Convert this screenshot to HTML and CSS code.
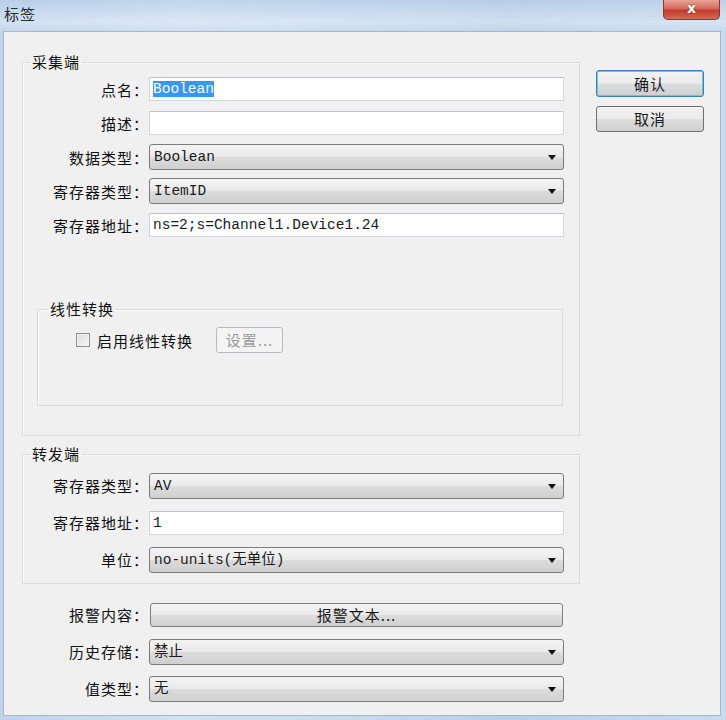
FILE: index.html
```html
<!DOCTYPE html>
<html lang="zh-CN">
<head>
  <meta charset="UTF-8" />
  <title>标签</title>
  <link rel="stylesheet" href="styles.css">
</head>
<body>
  <div class="window">
    <!-- Barre de titre -->
    <div class="titlebar">
      <span class="title">标签</span>
      <span class="close">x</span>
    </div>

    <div class="client">
      <div class="main">
        <fieldset class="group">
          <legend>采集端</legend>
          <div class="row">
            <label>点名：</label>
            <div class="edit"><span class="selected-text">Boolean</span></div>
          </div>
          <div class="row">
            <label>描述：</label>
            <div class="edit"></div>
          </div>
          <div class="row">
            <label>数据类型：</label>
            <div class="combo">Boolean</div>
          </div>
          <div class="row">
            <label>寄存器类型：</label>
            <div class="combo">ItemID</div>
          </div>
          <div class="row">
            <label>寄存器地址：</label>
            <div class="edit">ns=2;s=Channel1.Device1.24</div>
          </div>

          <fieldset class="group sub">
            <legend>线性转换</legend>
            <div class="check-row">
              <span class="checkbox"></span>
              <span class="check-label">启用线性转换</span>
              <button class="btn-small" disabled>设置...</button>
            </div>
          </fieldset>
        </fieldset>

        <fieldset class="group forward">
          <legend>转发端</legend>
          <div class="row">
            <label>寄存器类型：</label>
            <div class="combo">AV</div>
          </div>
          <div class="row">
            <label>寄存器地址：</label>
            <div class="edit">1</div>
          </div>
          <div class="row">
            <label>单位：</label>
            <div class="combo">no-units(无单位)</div>
          </div>
        </fieldset>

        <div class="extra">
          <div class="row">
            <label>报警内容：</label>
            <button class="btn-wide">报警文本...</button>
          </div>
          <div class="row">
            <label>历史存储：</label>
            <div class="combo">禁止</div>
          </div>
          <div class="row">
            <label>值类型：</label>
            <div class="combo">无</div>
          </div>
        </div>
      </div>

      <div class="side">
        <button class="btn default">确认</button>
        <button class="btn">取消</button>
      </div>
    </div>
  </div>
</body>
</html>
```

FILE: styles.css
```css
*{margin:0;padding:0;box-sizing:border-box}
body{
  font-family:'Noto Sans CJK SC','Liberation Sans',sans-serif;
  font-size:15px;
  color:#111;
  background:#c6d8ec;
}

.window{
  width:726px;height:720px;
  display:flex;flex-direction:column;
  background:linear-gradient(90deg,#bfd3ea 0%,#d3e1f1 25%,#c9dbee 45%,#b9cfe8 70%,#c8daee 100%);
}

/* ---------- Barre de titre ---------- */
.titlebar{height:31px;display:flex;justify-content:space-between;align-items:flex-start;padding:0 6px 0 4px;
  background:linear-gradient(180deg,rgba(180,204,232,.6) 0%,rgba(226,236,247,.55) 70%,rgba(205,221,239,.4) 100%)}
.title{line-height:27px;font-size:15px;color:#2a2a2a;letter-spacing:1px}
.close{width:57px;height:20px;border:1px solid #8a3a30;border-top:none;border-radius:0 0 5px 5px;
  background:linear-gradient(180deg,#e7a497 0%,#d6685a 45%,#c43d2c 55%,#d46a55 100%);
  color:#fff;font-family:'DejaVu Sans',sans-serif;font-weight:bold;font-size:14px;line-height:17px;text-align:center;
  text-shadow:0 0 2px #6a1e14}

/* ---------- Zone client ---------- */
.client{flex:1;margin:0 5px 4px 3px;background:#f0f0f0;border:1px solid #a7b6c8;display:flex;padding:20px 0 0 18px}
.main{width:558px}
.side{margin-left:16px;padding-top:18px;display:flex;flex-direction:column;gap:9px}

/* ---------- Groupes ---------- */
.group{border:1px solid #dadada;box-shadow:inset 1px 1px 0 #fafafa;padding:0 15px 0 0}
.group legend{line-height:20px;height:20px;margin-left:7px;padding:0 2px;letter-spacing:1px}
.group.sub{margin:57px 1px 29px 14px;padding:4px 0 48px 0}
.group.sub legend{margin-left:10px}
.group.forward{margin-top:8px;padding-top:3px;padding-bottom:5px}
.group.forward .row{height:37px}

.row{display:flex;align-items:center;height:34px}
.row label{width:126px;text-align:right;letter-spacing:1px;white-space:nowrap}
.extra{margin-top:12px;padding-left:1px}
.extra .row{height:37px}

/* ---------- Contrôles ---------- */
.edit,.combo{width:415px;font-family:'Liberation Mono','Noto Sans CJK SC',monospace;font-size:14.5px;color:#1a1a1a;white-space:nowrap}
.edit{height:24px;line-height:22px;padding:0 3px;background:#fff;border:1px solid #d3d6da;border-top-color:#c0c4c9}
.selected-text{background:#3399ff;color:#fff}
.combo{height:26px;line-height:24px;padding:0 4px;border:1px solid #7b7b7b;border-radius:3px;position:relative;
  background:linear-gradient(180deg,#f4f4f4 0%,#eaeaea 48%,#dcdcdc 52%,#cfcfcf 100%)}
.combo::after{content:'';position:absolute;right:7px;top:10px;border-left:4px solid transparent;border-right:4px solid transparent;border-top:5px solid #111}

.btn-wide{width:413px;margin-left:1px;height:24px;border:1px solid #7e7e7e;border-radius:3px;
  background:linear-gradient(180deg,#f3f3f3 0%,#ebebeb 48%,#dddddd 52%,#d0d0d0 100%);
  font-family:'Noto Sans CJK SC',sans-serif;font-size:15px;letter-spacing:1px;color:#1a1a1a;line-height:20px}

.check-row{display:flex;align-items:center;height:34px;padding-left:38px}
.checkbox{width:14px;height:14px;border:1px solid #8f8f8f;background:linear-gradient(135deg,#dcdcdc,#f6f6f6);box-shadow:inset 0 0 0 1px #f4f4f4}
.check-label{margin-left:7px;letter-spacing:1px}
.btn-small{margin-left:23px;width:67px;height:26px;border:1px solid #b5b9bd;border-radius:3px;background:#f4f4f4;
  font-family:'Noto Sans CJK SC',sans-serif;font-size:15px;color:#9c9c9c;letter-spacing:1px;line-height:22px}

.btn{width:108px;height:26px;border:1px solid #707070;border-radius:3px;
  background:linear-gradient(180deg,#f2f2f2 0%,#ebebeb 48%,#dddddd 52%,#cfcfcf 100%);
  font-family:'Noto Sans CJK SC',sans-serif;font-size:15px;color:#1a1a1a;letter-spacing:1px;line-height:22px}
.btn.default{height:27px;border-color:#3c7fb1;box-shadow:inset 0 0 0 1px #61c8ec}
```
